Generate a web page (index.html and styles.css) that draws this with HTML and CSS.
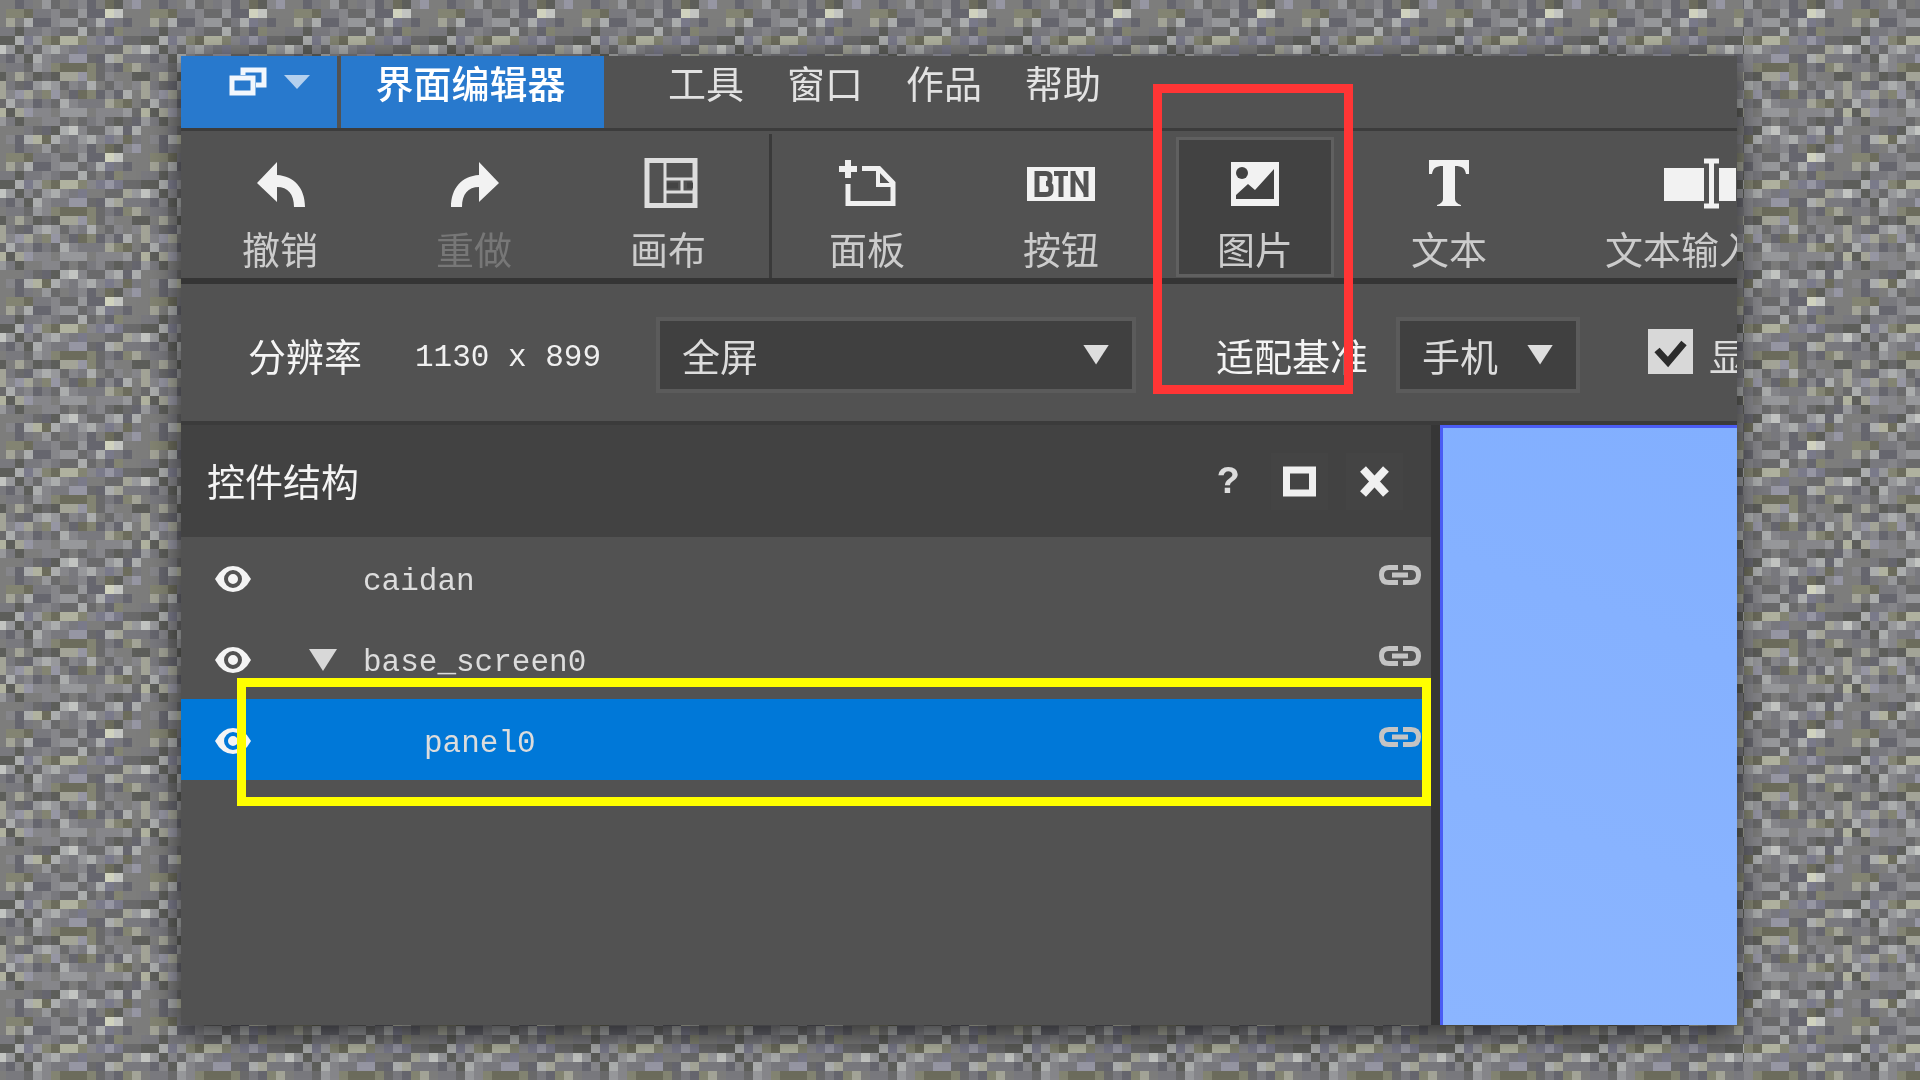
FILE: index.html
```html
<!DOCTYPE html>
<html lang="zh-CN">
<head>
<meta charset="utf-8">
<title>界面编辑器</title>
<link rel="stylesheet" href="styles.css">
</head>
<body>
<canvas class="texture" id="texture" aria-hidden="true"></canvas>
<main class="editor">
  <nav class="menubar">
    <button class="menu-switch" aria-label="切换">
      <svg width="40" height="32" viewBox="0 0 40 32" fill="none" stroke="#f2f7fd" stroke-width="5"><path d="M15 9V4h21v15H28"/><path d="M4 12h21v15H4z"/></svg>
      <svg width="26" height="14" viewBox="0 0 26 14"><path d="M0 0h26L13 14z" fill="#b4d0ee"/></svg>
    </button>
    <button class="menu-current">界面编辑器</button>
    <div class="menu-links">
      <a href="#tools">工具</a>
      <a href="#window">窗口</a>
      <a href="#works">作品</a>
      <a href="#help">帮助</a>
    </div>
  </nav>

  <div class="toolbar">
    <div class="tool-group">
      <button class="tool"><svg width="72" height="52" viewBox="0 0 72 52"><path d="M13 26L33 5v13c17 1 28 13 28 32H50C50 37 44 30 33 30v15z" fill="#f2f2f2"/></svg><span>撤销</span></button>
      <button class="tool tool-off"><svg width="72" height="52" viewBox="0 0 72 52"><path d="M61 26L41 5v13C24 19 13 31 13 50h11c0-13 6-20 17-20v15z" fill="#f2f2f2"/></svg><span>重做</span></button>
      <button class="tool"><svg width="72" height="52" viewBox="0 0 72 52" fill="none" stroke="#dedede"><path d="M15 3.500h48v45H15z" stroke-width="5"/><path d="M33 4v44M33 22h30M33 35h30" stroke-width="3"/><path d="M35 28.500h11M55 28.500h6" stroke="#444444" stroke-width="6"/><path d="M50 22v13" stroke-width="3"/></svg><span>画布</span></button>
    </div>
    <div class="tool-group">
      <button class="tool"><svg width="72" height="52" viewBox="0 0 72 52"><path d="M8 12h18M17 3v18" stroke="#f0f0f0" stroke-width="6"/><path d="M31 11.500H48L62 26V46.500H17V27" fill="none" stroke="#f0f0f0" stroke-width="5"/><path d="M47 11v17h15" fill="none" stroke="#f0f0f0" stroke-width="4"/></svg><span>面板</span></button>
      <button class="tool"><svg width="72" height="52" viewBox="0 0 72 52"><path d="M2 10h68v34H2z" fill="#f2f2f2"/><g fill="none" stroke="#525252" stroke-width="5"><path d="M12 16v22M9.500 16.500H21q4 0 4 4v2q0 4-4 4 5 0 5 4v3q0 4-5 4H9.500"/><path d="M29 16.500h14M36 16v24M48 40V14M61 40V14"/><path d="M48 16l13 21" stroke-width="4"/></g></svg><span>按钮</span></button>
      <button class="tool tool-active"><svg width="72" height="52" viewBox="0 0 72 52"><path d="M12 5h48v44H12z" fill="#f2f2f2"/><circle cx="23" cy="16" r="6" fill="#424242"/><path d="M17 42V38L29 27l7 6L55 12V42z" fill="#424242"/></svg><span>图片</span></button>
      <button class="tool"><svg width="72" height="52" viewBox="0 0 72 52"><path d="M16 3h40v14h-3c-1-6-4-8-11-8V42q0 4 6 6v1H24v-1q6-2 6-6V9c-7 0-10 2-11 8h-3z" fill="#f2f2f2"/></svg><span>文本</span></button>
      <button class="tool"><svg width="72" height="52" viewBox="0 0 72 52"><path d="M0 11h40v33H0zM55 11h17v33H55z" fill="#f2f2f2"/><path d="M40 4h15M40 49h15M47.500 4v45" stroke="#f2f2f2" stroke-width="5"/></svg><span>文本输入框</span></button>
    </div>
  </div>

  <div class="options">
    <label class="opt-label" for="screen-mode">分辨率</label>
    <output class="opt-size">1130 x 899</output>
    <div class="picker picker-wide"><select id="screen-mode"><option>全屏</option></select></div>
    <label class="opt-label" for="device">适配基准</label>
    <div class="picker picker-small"><select id="device"><option>手机</option></select></div>
    <label class="check"><input type="checkbox" checked><svg class="tick" width="45" height="45" viewBox="0 0 45 45" fill="none"><path d="M9 21l11 12L36 14" stroke="#2c2c2c" stroke-width="7"/></svg>显</label>
  </div>

  <div class="workspace">
    <section class="structure">
      <header class="structure-head">
        <h1>控件结构</h1>
        <div class="head-buttons">
          <button class="head-help">?</button>
          <button aria-label="最大化"><svg width="33" height="31" viewBox="0 0 33 31"><path d="M3.500 4h26v23h-26z" fill="none" stroke="#f0f0f0" stroke-width="7"/></svg></button>
          <button aria-label="关闭"><svg width="33" height="31" viewBox="0 0 33 31"><path d="M5 3l23 25M28 3L5 28" stroke="#f0f0f0" stroke-width="8"/></svg></button>
        </div>
      </header>
      <ul class="tree">
        <li class="node">
          <button aria-label="显示"><svg width="36" height="26" viewBox="0 0 36 26"><path d="M0 13Q7 0 18 0T36 13Q29 26 18 26T0 13z" fill="#f4f4f4"/><circle cx="18" cy="13" r="7" fill="none" class="iris" stroke-width="4"/></svg></button>
          <span class="fold"></span>
          <span class="name">caidan</span>
          <button class="link" aria-label="锁定"><svg width="42" height="20" viewBox="0 0 42 20" fill="none" stroke="#c4c4c4" stroke-width="5"><path d="M19 2.500H10q-7.500 0-7.500 7.500t7.500 7.500h9M24 2.500h8q7.500 0 7.500 7.500T32 17.500H24M13 10h16"/></svg></button>
        </li>
        <li class="node">
          <button aria-label="显示"><svg width="36" height="26" viewBox="0 0 36 26"><path d="M0 13Q7 0 18 0T36 13Q29 26 18 26T0 13z" fill="#f4f4f4"/><circle cx="18" cy="13" r="7" fill="none" class="iris" stroke-width="4"/></svg></button>
          <button class="fold" aria-label="折叠"><svg width="28" height="22" viewBox="0 0 28 22"><path d="M0 0h28L14 22z" fill="#d8d8d8"/></svg></button>
          <span class="name">base_screen0</span>
          <button class="link" aria-label="锁定"><svg width="42" height="20" viewBox="0 0 42 20" fill="none" stroke="#c4c4c4" stroke-width="5"><path d="M19 2.500H10q-7.500 0-7.500 7.500t7.500 7.500h9M24 2.500h8q7.500 0 7.500 7.500T32 17.500H24M13 10h16"/></svg></button>
        </li>
        <li class="node node-child node-selected">
          <button aria-label="显示"><svg width="36" height="26" viewBox="0 0 36 26"><path d="M0 13Q7 0 18 0T36 13Q29 26 18 26T0 13z" fill="#f4f4f4"/><circle cx="18" cy="13" r="7" fill="none" class="iris" stroke-width="4"/></svg></button>
          <span class="fold"></span>
          <span class="name">panel0</span>
          <button class="link" aria-label="锁定"><svg width="42" height="20" viewBox="0 0 42 20" fill="none" stroke="#c4c4c4" stroke-width="5"><path d="M19 2.500H10q-7.500 0-7.500 7.500t7.500 7.500h9M24 2.500h8q7.500 0 7.500 7.500T32 17.500H24M13 10h16"/></svg></button>
        </li>
      </ul>
    </section>
    <div class="stage"></div>
  </div>
  <div class="mark mark-red"></div>
  <div class="mark mark-yellow"></div>
</main>
<script src="texture.js"></script>
</body>
</html>
```

FILE: styles.css
```css
* {
  box-sizing: border-box;
}

body {
  margin: 0;
  min-height: 100vh;
  padding: 56px 183px 55px 181px;
  display: flex;
  background: #7c7c80;
}

.texture {
  position: fixed;
  inset: 0;
  z-index: -1;
}

button {
  border: 0;
  padding: 0;
  background: none;
  color: inherit;
  font: inherit;
  display: flex;
  align-items: center;
  justify-content: center;
}

svg {
  display: block;
  flex: none;
}

.editor {
  position: relative;
  flex: 1;
  min-width: 0;
  overflow: hidden;
  display: flex;
  flex-direction: column;
  background: #525252;
  color: #dcdcdc;
  font-family: "Noto Sans CJK SC", sans-serif;
  font-size: 38px;
  line-height: 48px;
  white-space: nowrap;
  box-shadow: 0 8px 30px rgba(0, 0, 0, 0.65);
}

/* Menu bar */
.menubar {
  display: flex;
  gap: 4px;
  height: 75px;
  border-bottom: 3px solid #3c3c3c;
}

.menu-switch {
  width: 156px;
  gap: 16px;
  padding: 0 0 20px 20px;
  background: #2879cd;
}

.menu-current {
  width: 263px;
  padding: 0 4px 20px 0;
  background: #2879cd;
  color: #fff;
  font-weight: 500;
}

.menu-links {
  display: flex;
  align-items: center;
  gap: 43px;
  padding: 0 0 20px 60px;
}

.menu-links a {
  color: #e2e2e2;
  text-decoration: none;
}

/* Tool bar */
.toolbar {
  display: flex;
  height: 153px;
  border-bottom: 6px solid #353535;
}

.tool-group {
  display: flex;
  gap: 36px;
  padding: 6px 22px 0 20px;
  flex: none;
}

.tool-group + .tool-group {
  margin-top: 3px;
  padding: 3px 0 0 16px;
  border-left: 3px solid #3a3a3a;
}

.tool {
  flex-direction: column;
  justify-content: flex-start;
  gap: 15px;
  height: 140px;
  padding: 17px 38px 0;
  border: 3px solid transparent;
  color: #cccccc;
}

.tool-off {
  color: #777777;
}

.tool-active {
  border-color: #606060;
  background: #424242;
}

/* Resolution options */
.options {
  display: flex;
  align-items: center;
  height: 141px;
  padding: 4px 0 0 67px;
  border-bottom: 4px solid #3b3b3b;
}

.opt-label {
  color: #f4f4f4;
}

.opt-size {
  margin: 0 55px 0 53px;
  padding-top: 6px;
  font-family: "Liberation Mono", monospace;
  font-size: 31px;
  color: #f0f0f0;
}

.picker {
  position: relative;
  flex: none;
}

.picker-wide {
  width: 480px;
  margin-right: 80px;
}

.picker-small {
  width: 184px;
  margin: 0 68px 0 28px;
}

.picker select {
  appearance: none;
  width: 100%;
  height: 76px;
  padding: 0 22px;
  border: 4px solid #5b5b5b;
  border-radius: 0;
  background: #404040;
  color: #dcdcdc;
  font: inherit;
}

.picker::after {
  content: "";
  position: absolute;
  top: 28px;
  right: 27px;
  width: 26px;
  height: 20px;
  background: #dedede;
  clip-path: polygon(0 0, 100% 0, 50% 100%);
  pointer-events: none;
}

.check {
  position: relative;
  display: flex;
  align-items: center;
  gap: 16px;
}

.check input {
  appearance: none;
  width: 45px;
  height: 45px;
  margin: 0 0 6px;
  background: #d8d8d8;
}

.tick {
  position: absolute;
  left: 0;
  top: 0;
}

/* Work area */
.workspace {
  flex: 1;
  display: flex;
}

.structure {
  flex: none;
  width: 1259px;
  border-right: 9px solid #363636;
}

.structure-head {
  display: flex;
  align-items: center;
  justify-content: space-between;
  height: 112px;
  padding: 0 28px 0 26px;
  background: #424242;
}

.structure-head h1 {
  margin: 0 0 2px;
  font-size: 38px;
  font-weight: 400;
  color: #f4f4f4;
}

.head-buttons {
  display: flex;
  gap: 18px;
}

.head-buttons button {
  width: 57px;
  height: 57px;
  background: #444444;
}

.head-buttons .head-help {
  padding: 4px 0 0 8px;
  background: none;
  font-family: "Liberation Mono", monospace;
  font-weight: 700;
}

.tree {
  margin: 0;
  padding: 0;
  list-style: none;
}

.node {
  display: grid;
  grid-template-columns: 36px 86px 1fr 42px;
  align-items: center;
  height: 81px;
  padding: 2px 10px 0 34px;
}

.node .fold {
  justify-self: end;
}

.iris {
  stroke: #525252;
}

.name {
  padding: 6px 0 0 26px;
  font-family: "Liberation Mono", monospace;
  font-size: 31px;
}

.node-child .name {
  padding-left: 87px;
}

.link {
  padding-bottom: 8px;
}

.node-selected {
  background: #0078d8;
}

.node-selected .iris {
  stroke: #0078d8;
}

.stage {
  flex: 1;
  border: solid #4a5cf4;
  border-width: 3px 0 0 3px;
  background: linear-gradient(200deg, #82afff, #8bb5ff);
}

/* Callout frames */
.mark {
  position: absolute;
  pointer-events: none;
}

.mark-red {
  left: 972px;
  top: 28px;
  width: 200px;
  height: 310px;
  border: 9px solid #ff3535;
}

.mark-yellow {
  left: 56px;
  top: 622px;
  width: 1194px;
  height: 128px;
  border: 9px solid #ffff00;
}
```

FILE: texture.js
```js
// Stone texture: a 16 x 16 tile of 9px cells, repeated over the window.
const CELL = 9;
const TILE = [
  "aqpaebapdqalcdra",
  "oolppdbbeqqGgaaa",
  "mafqqdeebpfhpqaa",
  "pcppdpbbfbaqoaap",
  "cfheolnnodhrhbbc",
  "ecdbefdphaabbmeg",
  "qdcfdpprrbqfmppp",
  "ppbedolllobpqoma",
  "amacbcmmrobdaacc",
  "pbqefebdpfabdadm",
  "drmaoraqloqdqfam",
  "fpdqpbfdpppmolab",
  "cmrddaeeeadddebn",
  "pcaaddbabpdbcbqe",
  "aapbqcfgdbbefqfa",
  "dqfnlfdpefdhdlpa"
];
const COLORS = {
  a: "#7d7d7c", b: "#6a6a6b", c: "#5d5e5a", d: "#86868a", e: "#97989b",
  f: "#abadad", g: "#c2c4c1", G: "#d0d2be", h: "#7a7a8a", p: "#79797e",
  q: "#66666e", r: "#9696a3", o: "#838472", l: "#6c6c5c", m: "#a3a497",
  n: "#b0b29f"
};
const canvas = document.getElementById("texture");

function fillCells(ctx, fromX, shift, firstCol) {
  for (let row = 0; row * CELL < canvas.height; row++) {
    const line = TILE[row % 16];
    for (let col = 0; fromX + shift + (col - 1) * CELL < canvas.width; col++) {
      ctx.fillStyle = COLORS[line[(col + firstCol) % 16]];
      ctx.fillRect(fromX + shift + (col - 1) * CELL, row * CELL, CELL, CELL);
    }
  }
}

function draw() {
  canvas.width = window.innerWidth;
  canvas.height = window.innerHeight;
  const ctx = canvas.getContext("2d");
  fillCells(ctx, 0, 6, 15);
  fillCells(ctx, canvas.width - 176, CELL, 4);
}

draw();
window.addEventListener("resize", draw);
```
